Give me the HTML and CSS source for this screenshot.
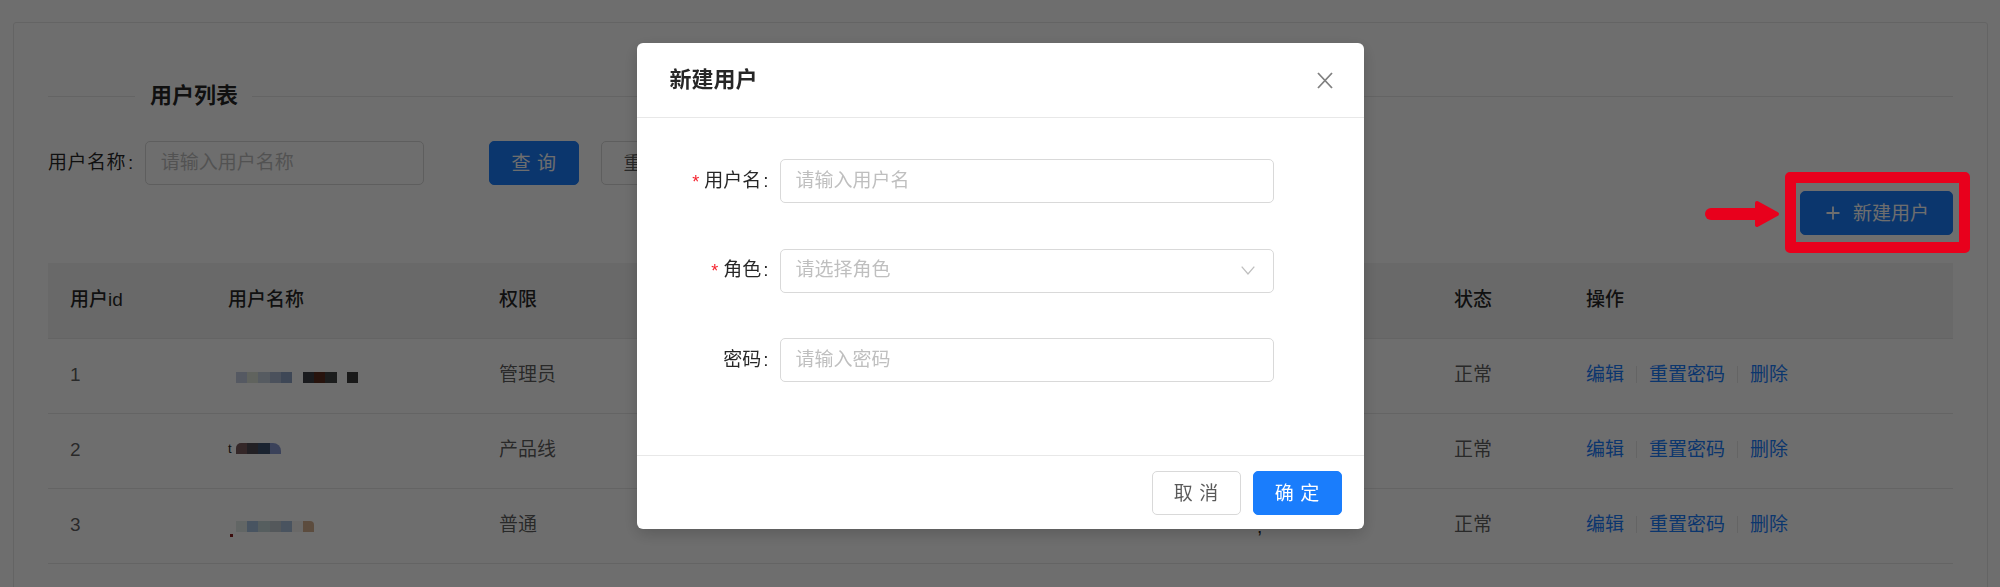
FILE: index.html
```html
<!DOCTYPE html>
<html lang="zh-CN">
<head>
<meta charset="utf-8">
<title>用户列表</title>
<link rel="stylesheet" href="styles.css">
</head>
<body>
<div class="page">
  <div class="card">
    <div class="divider">
      <span class="line short"></span>
      <span class="divider-text">用户列表</span>
      <span class="line grow"></span>
    </div>
    <div class="search">
      <label class="search-label">用户名称<span class="colon">:</span></label>
      <div class="input search-input"><span class="ph">请输入用户名称</span></div>
      <button class="btn btn-primary query"><span class="two">查询</span></button>
      <button class="btn reset"><span class="two">重置</span></button>
    </div>
    <div class="toolbar">
      <button class="btn btn-primary create">
        <svg class="plus" width="14" height="14" viewBox="0 0 14 14"><path d="M7 0.5V13.5M0.5 7H13.5" stroke="#fff" stroke-width="1.8" fill="none"/></svg>
        <span>新建用户</span>
      </button>
    </div>
    <table class="table">
      <thead>
        <tr>
          <th class="c-id">用户id</th>
          <th class="c-name">用户名称</th>
          <th class="c-role">权限</th>
          <th class="c-a">创建时间</th>
          <th class="c-b">更新时间</th>
          <th class="c-status">状态</th>
          <th class="c-op">操作</th>
        </tr>
      </thead>
      <tbody>
        <tr>
          <td>1</td>
          <td><span class="mosaic m1"><i class="b1"></i><i class="b2"></i><i class="b3"></i><i class="b4"></i><i class="b5"></i><i class="gap"></i><i class="d1"></i><i class="d2"></i><i class="d3"></i><i class="gap2"></i><i class="d4"></i></span></td>
          <td>管理员</td>
          <td></td>
          <td></td>
          <td>正常</td>
          <td><a class="link">编辑</a><span class="sep"></span><a class="link">重置密码</a><span class="sep"></span><a class="link">删除</a></td>
        </tr>
        <tr>
          <td>2</td>
          <td><span class="mosaic m2"><span class="lead-t">t</span><i class="e1"></i><i class="e2"></i><i class="e3"></i><i class="e4"></i></span></td>
          <td>产品线</td>
          <td></td>
          <td></td>
          <td>正常</td>
          <td><a class="link">编辑</a><span class="sep"></span><a class="link">重置密码</a><span class="sep"></span><a class="link">删除</a></td>
        </tr>
        <tr>
          <td>3</td>
          <td><span class="mosaic m3"><span class="lead-dot"></span><i class="f0"></i><i class="f1"></i><i class="f2"></i><i class="f3"></i><i class="f4"></i><i class="f5"></i><i class="f6"></i></span></td>
          <td>普通</td>
          <td></td>
          <td><span class="tail-mark">,</span></td>
          <td>正常</td>
          <td><a class="link">编辑</a><span class="sep"></span><a class="link">重置密码</a><span class="sep"></span><a class="link">删除</a></td>
        </tr>
      </tbody>
    </table>
  </div>
</div>

<div class="mask"></div>

<div class="modal-wrap">
  <div class="modal">
    <div class="modal-header">
      <span class="modal-title">新建用户</span>
      <svg class="close" width="16" height="17" viewBox="0 0 16 17"><path d="M1 1L15 16M15 1L1 16" stroke="#808080" stroke-width="1.8" fill="none"/></svg>
    </div>
    <div class="modal-body">
      <div class="form-item">
        <div class="form-label"><span class="req">*</span>用户名<span class="colon">:</span></div>
        <div class="input form-control"><span class="ph">请输入用户名</span></div>
      </div>
      <div class="form-item">
        <div class="form-label"><span class="req">*</span>角色<span class="colon">:</span></div>
        <div class="input form-control select"><span class="ph">请选择角色</span>
          <svg class="arrow" width="14" height="9" viewBox="0 0 14 9"><path d="M0.7 0.7L7 8L13.3 0.7" stroke="#bfbfbf" stroke-width="1.3" fill="none"/></svg>
        </div>
      </div>
      <div class="form-item">
        <div class="form-label">密码<span class="colon">:</span></div>
        <div class="input form-control"><span class="ph">请输入密码</span></div>
      </div>
    </div>
    <div class="modal-footer">
      <button class="btn"><span class="two">取消</span></button>
      <button class="btn btn-primary ok"><span class="two">确定</span></button>
    </div>
  </div>
</div>

<div class="annot-box"></div>
<svg class="annot-arrow" width="85" height="32" viewBox="0 0 85 32">
  <path d="M11 16H60" stroke="#e8001c" stroke-width="12" stroke-linecap="round" fill="none"/>
  <path d="M57 5L77 16L57 27Z" fill="#e8001c" stroke="#e8001c" stroke-width="4" stroke-linejoin="round"/>
</svg>
</body>
</html>
```

FILE: styles.css
```css
* { box-sizing: border-box; }

html, body {
  margin: 0;
  padding: 0;
}

body {
  position: relative;
  width: 2000px;
  height: 587px;
  overflow: hidden;
  background: #fff;
  font-family: "Liberation Sans", "Noto Sans CJK SC", sans-serif;
  font-size: 19px;
  line-height: 1.5;
  color: rgba(0, 0, 0, 0.65);
}

.page {
  padding: 22px 12px 0 13px;
}

.card {
  height: 620px;
  border: 1px solid #e8e8e8;
  border-radius: 3px;
  background: #fff;
  padding: 33px 34px 0 34px;
}

/* divider with title */
.divider {
  display: flex;
  align-items: center;
  height: 30px;
  margin-top: 25px;
  margin-bottom: 30px;
}
.line {
  height: 1px;
  background: #e8e8e8;
}
.line.short { width: 87px; }
.line.grow { flex: 1; }
.divider-text {
  padding: 0 14px 0 15px;
  font-size: 22px;
  line-height: 30px;
  font-weight: 600;
  color: rgba(0, 0, 0, 0.85);
}

/* search row */
.search {
  display: flex;
  align-items: center;
  height: 44px;
}
.search-label {
  color: rgba(0, 0, 0, 0.85);
  letter-spacing: 0.5px;
  margin-right: 11px;
  white-space: nowrap;
}
.search-label .colon {
  margin-left: 2px;
}
.input {
  display: flex;
  align-items: center;
  height: 44px;
  padding: 0 15px;
  border: 1px solid #d9d9d9;
  border-radius: 5px;
  background: #fff;
}
.ph {
  color: #bfbfbf;
  white-space: nowrap;
}
.search-input { width: 279px; }

.btn {
  display: inline-flex;
  align-items: center;
  justify-content: center;
  height: 44px;
  padding: 0;
  border: 1px solid #d9d9d9;
  border-radius: 5px;
  background: #fff;
  color: rgba(0, 0, 0, 0.65);
  font-family: inherit;
  font-size: 19px;
  line-height: 1;
  white-space: nowrap;
}
.btn-primary {
  background: #1a7dfc;
  border-color: #1a7dfc;
  color: #fff;
}
.two {
  letter-spacing: 0.34em;
  margin-right: -0.34em;
}
.query { width: 90px; margin-left: 65px; }
.reset { width: 90px; margin-left: 22px; }

.toolbar {
  display: flex;
  justify-content: flex-end;
  margin-top: 6px;
}
.create {
  width: 153px;
  justify-content: flex-start;
  padding-left: 25px;
}
.create .plus {
  margin-right: 13px;
}

/* table */
.table {
  width: 100%;
  margin-top: 28px;
  border-collapse: collapse;
  table-layout: fixed;
}
.table th,
.table td {
  height: 75px;
  padding: 0 22px;
  text-align: left;
  vertical-align: middle;
  border-bottom: 1px solid #e8e8e8;
  white-space: nowrap;
}
.table th {
  background: #f3f3f3;
  font-weight: 500;
  color: rgba(0, 0, 0, 0.85);
}
.c-id { width: 158px; }
.c-name { width: 271px; }
.c-role { width: 280px; }
.c-a { width: 330px; }
.c-b { width: 345px; }
.c-status { width: 132px; }

.link {
  color: #1a7dfc;
  text-decoration: none;
}
.sep {
  display: inline-block;
  width: 1px;
  height: 17px;
  margin: 0 12px;
  background: #e8e8e8;
  vertical-align: -2px;
}
.tail-mark {
  display: inline-block;
  margin-left: 148px;
  color: #222;
  position: relative;
  top: 2px;
}

/* blurred user names */
.mosaic {
  display: inline-flex;
  align-items: flex-start;
  height: 12px;
  vertical-align: middle;
  position: relative;
  top: 2px;
}
.mosaic i {
  display: block;
  width: 11.2px;
  height: 11px;
}
.m1 { margin-left: 8px; }
.m1 .b1 { background: #c6cee4; }
.m1 .b2 { background: #dfe6da; }
.m1 .b3 { background: #c8d4e2; }
.m1 .b4 { background: #adbdd6; }
.m1 .b5 { background: #90a6c8; }
.m1 .gap { width: 11px; }
.m1 .d1 { background: #3d4046; }
.m1 .d2 { background: #5a2c1e; }
.m1 .d3 { background: #414343; }
.m1 .gap2 { width: 10px; }
.m1 .d4 { background: #3c3c3c; }

.m2 { top: -2px; }
.m2 .lead-t {
  font-size: 13px;
  line-height: 12px;
  color: #2a2a2a;
  width: 8px;
}
.m2 .e1 { background: #7a5a5e; border-radius: 5px 0 0 0; }
.m2 .e2 { background: #4f4c55; }
.m2 .e3 { background: #3e5270; }
.m2 .e4 { background: #8a9ad0; border-radius: 0 8px 0 0; width: 11.5px; }

.m3 { top: 1px; }
.m3 .lead-dot {
  display: block;
  width: 8px;
  height: 12px;
  position: relative;
}
.m3 .lead-dot::after {
  content: "";
  position: absolute;
  left: 2px;
  bottom: -4px;
  width: 3px;
  height: 3px;
  background: #8a1e1e;
}
.m3 .f0 { background: #e4ecea; }
.m3 .f1 { background: #a8c4e2; }
.m3 .f2 { background: #c8dadc; }
.m3 .f3 { background: #c2cbd2; }
.m3 .f4 { background: #a9c0dc; }
.m3 .f5 { background: #f6f4f0; }
.m3 .f6 { background: #d6b090; border-radius: 0 4px 0 0; }

/* mask + modal */
.mask {
  position: fixed;
  inset: 0;
  background: rgba(0, 0, 0, 0.57);
}
.modal-wrap {
  position: fixed;
  inset: 0;
  display: flex;
  justify-content: center;
  align-items: flex-start;
  padding-top: 43px;
}
.modal {
  width: 727px;
  background: #fff;
  border-radius: 6px;
  box-shadow: 0 5px 16px rgba(0, 0, 0, 0.18);
}
.modal-header {
  display: flex;
  align-items: center;
  justify-content: space-between;
  height: 75px;
  padding: 0 31px 0 33px;
  border-bottom: 1px solid #e8e8e8;
}
.modal-title {
  font-size: 22px;
  line-height: 30px;
  font-weight: 600;
  color: rgba(0, 0, 0, 0.85);
}
.modal-body {
  padding: 35px 33px 33.5px 33px;
}
.form-item {
  display: flex;
  align-items: center;
  height: 56px;
  margin-bottom: 33.5px;
}
.form-label {
  width: 110px;
  text-align: right;
  color: rgba(0, 0, 0, 0.85);
  white-space: nowrap;
}
.form-label .colon {
  margin: 0 11px 0 2px;
}
.req {
  color: #f5222d;
  margin-right: 5px;
  font-size: 18px;
  position: relative;
  top: 1px;
}
.form-control {
  width: 494px;
}
.select {
  justify-content: space-between;
  padding-right: 18px;
}
.modal-footer {
  display: flex;
  justify-content: flex-end;
  gap: 12px;
  padding: 15px 22px 14px;
  border-top: 1px solid #e8e8e8;
}
.modal-footer .btn {
  width: 89px;
}

/* annotation drawn over the screenshot */
.annot-box {
  position: absolute;
  left: 1785px;
  top: 172px;
  width: 185px;
  height: 81px;
  border: 11px solid #e8001c;
  border-radius: 5px;
}
.annot-arrow {
  position: absolute;
  left: 1700px;
  top: 198px;
}
```
